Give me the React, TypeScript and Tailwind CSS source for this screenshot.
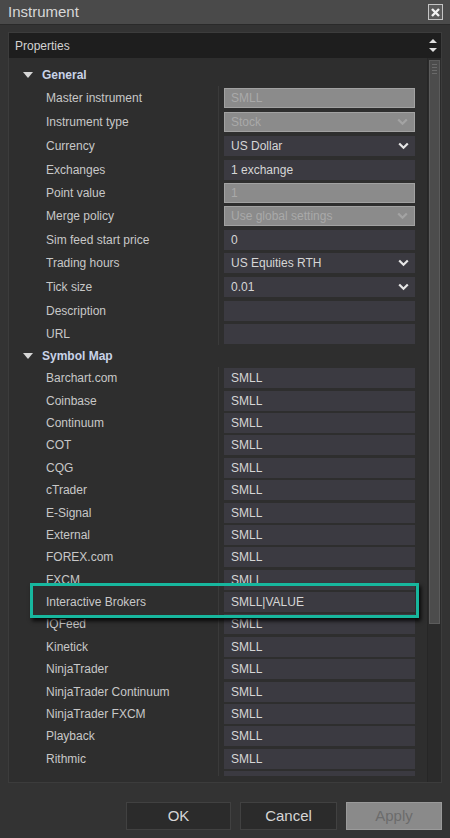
import { useState } from "react";

type Kind = "text" | "disabled" | "combo" | "disabledCombo";

type Prop = { label: string; value: string; kind: Kind; h: number };

const general: Prop[] = [
  { label: "Master instrument", value: "SMLL", kind: "disabled", h: 23.5 },
  { label: "Instrument type", value: "Stock", kind: "disabledCombo", h: 24 },
  { label: "Currency", value: "US Dollar", kind: "combo", h: 24.5 },
  { label: "Exchanges", value: "1 exchange", kind: "text", h: 23 },
  { label: "Point value", value: "1", kind: "disabled", h: 23 },
  { label: "Merge policy", value: "Use global settings", kind: "disabledCombo", h: 24 },
  { label: "Sim feed start price", value: "0", kind: "text", h: 23.5 },
  { label: "Trading hours", value: "US Equities RTH", kind: "combo", h: 23.5 },
  { label: "Tick size", value: "0.01", kind: "combo", h: 24.5 },
  { label: "Description", value: "", kind: "text", h: 23.5 },
  { label: "URL", value: "", kind: "text", h: 22 },
];

const providers = [
  "Barchart.com",
  "Coinbase",
  "Continuum",
  "COT",
  "CQG",
  "cTrader",
  "E-Signal",
  "External",
  "FOREX.com",
  "FXCM",
  "Interactive Brokers",
  "IQFeed",
  "Kinetick",
  "NinjaTrader",
  "NinjaTrader Continuum",
  "NinjaTrader FXCM",
  "Playback",
  "Rithmic",
  "",
];

function Chevron({ muted }: { muted?: boolean }) {
  return (
    <svg width="11" height="8" viewBox="0 0 11 8" className="shrink-0">
      <path
        d="M1.2 1.5 L5.5 5.8 L9.8 1.5"
        fill="none"
        stroke={muted ? "#a3a3a3" : "#e6e6e6"}
        strokeWidth="2.2"
      />
    </svg>
  );
}

function Triangle() {
  return (
    <svg width="10" height="6" viewBox="0 0 10 6" className="shrink-0">
      <path d="M0 0 H10 L5 6 Z" fill="#d6d6d6" />
    </svg>
  );
}

function ValueBox({ value, kind }: { value: string; kind: Kind }) {
  const disabled = kind === "disabled" || kind === "disabledCombo";
  const combo = kind === "combo" || kind === "disabledCombo";
  return (
    <div
      className={
        disabled
          ? "flex h-[20px] w-[191px] items-center justify-between border border-[#a2a2a2] bg-[#8b8b8b] pl-[6px] pr-[6px] text-[#a9a9a9]"
          : "flex h-[20px] w-[191px] items-center justify-between bg-[#3b3a41] pl-[7px] pr-[6px] text-[#d6d6d6]"
      }
    >
      <span>{value}</span>
      {combo ? <Chevron muted={disabled} /> : null}
    </div>
  );
}

function Row({ label, value, kind, h }: Prop) {
  return (
    <div className="flex items-stretch" style={{ height: h }}>
      <div className="flex w-[210px] items-center border-r border-[#3a3a3a] pl-[37px] text-[#c8c8c8]">
        {label}
      </div>
      <div className="flex items-center pl-[5px]">
        <ValueBox value={value} kind={kind} />
      </div>
    </div>
  );
}

function Section({ title, h }: { title: string; h: number }) {
  return (
    <div className="flex items-center gap-[9px] pl-[14px]" style={{ height: h }}>
      <Triangle />
      <span className="font-bold text-[#c9d3e8]">{title}</span>
    </div>
  );
}

export default function App() {
  const [selected] = useState("Interactive Brokers");

  return (
    <div
      className="relative flex h-[838px] w-[450px] flex-col overflow-hidden bg-[#333333] text-[12px]"
      style={{ fontFamily: '"Liberation Sans", Arial, sans-serif' }}
    >
      <div className="flex h-[24px] shrink-0 items-center justify-between bg-[#4a4a4a] pl-[8px] pr-[7px]">
        <span className="text-[15px] text-[#d8d8d8]">Instrument</span>
        <div className="flex h-[16px] w-[15px] items-center justify-center border border-[#c4c4c4] bg-[#5a5a5a]">
          <svg width="9" height="9" viewBox="0 0 9 9">
            <path d="M1 1 L8 8 M8 1 L1 8" stroke="#f2f2f2" strokeWidth="2.4" />
          </svg>
        </div>
      </div>
      <div className="h-[1px] bg-[#2a2a2a]" />

      <div className="mx-[8px] mt-[7px] flex h-[751px] flex-col border border-[#3c3c3c]">
        <div className="flex h-[25px] shrink-0 items-center justify-between bg-[#1e1e1e] pl-[6px] pr-[4px]">
          <span className="text-[#d2d2d2]">Properties</span>
          <div className="flex flex-col items-center gap-[5px]">
            <svg width="8" height="4" viewBox="0 0 8 4">
              <path d="M0 4 L4 0 L8 4 Z" fill="#e0e0e0" />
            </svg>
            <svg width="8" height="4" viewBox="0 0 8 4">
              <path d="M0 0 H8 L4 4 Z" fill="#e0e0e0" />
            </svg>
          </div>
        </div>

        <div className="flex min-h-0 flex-1 bg-[#2e2e2e]">
          <div className="flex min-w-0 flex-1 flex-col">
            <div className="h-[718px] overflow-hidden pt-[5px]">
              <Section title="General" h={23} />
              {general.map((p) => (
                <Row key={p.label} {...p} />
              ))}
              <Section title="Symbol Map" h={22} />
              {providers.map((name, i) => (
                <Row
                  key={i}
                  label={name}
                  value={name === selected ? "SMLL|VALUE" : "SMLL"}
                  kind="text"
                  h={22.4}
                />
              ))}
            </div>
          </div>

          <div className="flex w-[14px] shrink-0 flex-col border-l border-[#262626] bg-[#2b2b2b] px-[1px] pt-[2px]">
            <div className="flex h-[564px] flex-col gap-[2px] border border-[#5c5c5c] bg-[#4c4c4c] px-[2px] pt-[3px]">
              <div className="h-[1px] bg-[#6a6a6a]" />
              <div className="h-[1px] bg-[#6a6a6a]" />
              <div className="h-[1px] bg-[#6a6a6a]" />
              <div className="h-[1px] bg-[#6a6a6a]" />
            </div>
          </div>
        </div>
      </div>

      <div className="mt-[19px] flex justify-end gap-[9px] pr-[8px]">
        <button
          type="button"
          className="h-[28px] w-[105px] border border-[#414141] bg-[#2b2b2b] text-[15px] text-[#d6d6d6]"
        >
          OK
        </button>
        <button
          type="button"
          className="h-[28px] w-[97px] border border-[#414141] bg-[#2b2b2b] text-[15px] text-[#d6d6d6]"
        >
          Cancel
        </button>
        <button
          type="button"
          className="h-[28px] w-[96px] border border-[#9a9a9a] bg-[#8a8a8a] text-[15px] text-[#6c6c6c]"
        >
          Apply
        </button>
      </div>

      <div className="pointer-events-none absolute left-[30px] top-[583px] h-[35px] w-[389px] border-[3px] border-[#17b79e] shadow-[2px_3px_4px_rgba(0,0,0,0.85)]" />
    </div>
  );
}
